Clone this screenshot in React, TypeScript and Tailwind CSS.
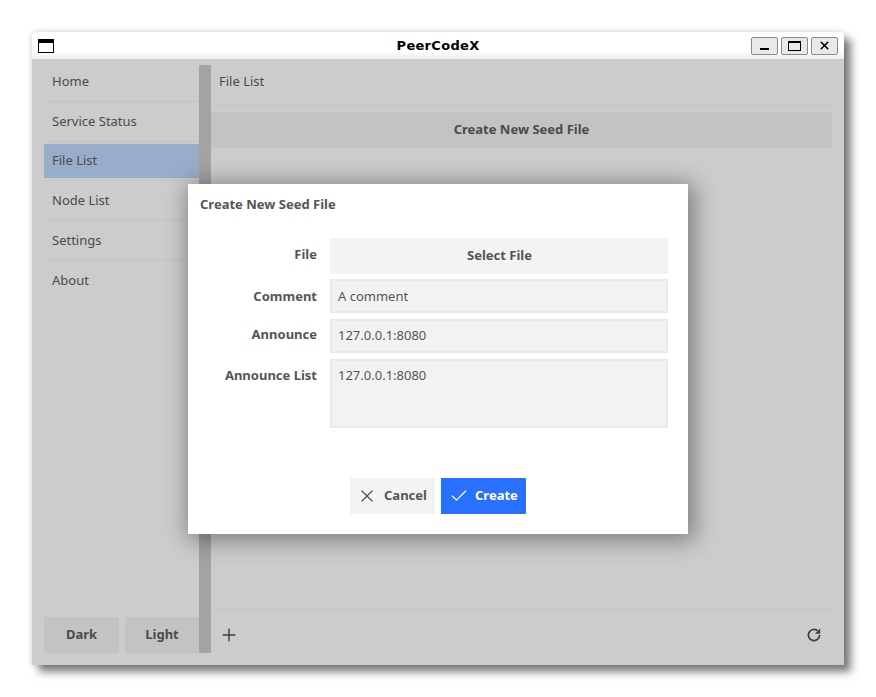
import { Check, Plus, X } from "lucide-react";

const navItems = ["Home", "Service Status", "File List", "Node List", "Settings", "About"];

const WindowButton = ({ children }: { children: React.ReactNode }) => (
  <div className="w-[27px] h-[18px] flex items-center justify-center border border-[#8a8a8a] rounded-[2px] bg-[#e9e9e9]">
    {children}
  </div>
);

const Field = ({ label, className, children }: { label: string; className: string; children: React.ReactNode }) => (
  <div className={`flex ${className}`}>
    <label className="w-[129px] text-right font-bold text-[13px] text-[#555555]">{label}</label>
    <div className="ml-[13px] w-[338px]">{children}</div>
  </div>
);

const inputClass =
  "w-full border-2 border-[#e9e9e9] bg-[#f2f2f2] px-[6px] text-[13px] text-[#555555] flex";

const App = () => {
  return (
    <div className="w-[876px] h-[697px] bg-white overflow-hidden pt-[32px] pl-[32px] font-['Noto_Sans',sans-serif]">
      <div className="relative w-[812px] h-[633px] rounded-t-[3px] bg-[#cccccc] shadow-[0_0_6px_rgba(0,0,0,0.18),7px_7px_8px_rgba(0,0,0,0.5)] flex flex-col">
        {/* Title bar */}
        <div className="h-[27px] shrink-0 bg-gradient-to-b from-white from-70% to-[#eeeeee] rounded-t-[3px] flex items-center pl-[6px] pr-[6px]">
          <div className="flex-1">
            <div className="w-[16px] h-[14px] border border-black border-t-[4px]" />
          </div>
          <div className="text-center text-[13px] font-bold text-black font-['DejaVu_Sans',sans-serif] tracking-[0.3px]">
            PeerCodeX
          </div>
          <div className="flex-1 flex justify-end gap-[3px]">
            <WindowButton>
              <div className="w-[9px] h-[2px] bg-black mt-[7px]" />
            </WindowButton>
            <WindowButton>
              <div className="w-[13px] h-[10px] border border-black border-t-2" />
            </WindowButton>
            <WindowButton>
              <X size={13} strokeWidth={3} className="text-black" />
            </WindowButton>
          </div>
        </div>

        {/* Body */}
        <div className="flex-1 min-h-0 flex pt-[6px] pb-[12px] pl-[12px] pr-[12px] text-[13px] text-[#4b4b4b]">
          {/* Sidebar */}
          <div className="w-[155px] flex flex-col justify-between">
            <div className="flex flex-col -mt-[3px]">
              {navItems.map((item) => (
                <div key={item} className="h-[39.75px] border-b border-[#c3c3c3] last:border-b-0">
                  <div
                    className={`h-[34px] mt-[2.5px] flex items-center px-[8px] ${
                      item === "File List" ? "bg-[#98adcc]" : ""
                    }`}
                  >
                    {item}
                  </div>
                </div>
              ))}
            </div>
            <div className="flex gap-[6px] font-bold">
              <div className="w-[75px] h-[36px] bg-[#c3c3c3] flex items-center justify-center">Dark</div>
              <div className="w-[74px] h-[36px] bg-[#c3c3c3] flex items-center justify-center">Light</div>
            </div>
          </div>

          {/* Splitter */}
          <div className="w-[12px] bg-[#a3a3a3]" />

          {/* Main */}
          <div className="flex-1 flex flex-col">
            <div className="h-[41px] border-b border-[#c3c3c3] flex items-center pl-[8px] pb-[7px]">File List</div>
            <div className="mt-[6px] h-[36px] bg-[#c3c3c3] flex items-center justify-center font-bold">
              Create New Seed File
            </div>
            <div className="flex-1" />
            <div className="h-[44px] border-t border-[#c3c3c3] flex items-center justify-between pl-[8px] pr-[8px] pt-[6px]">
              <Plus size={20} strokeWidth={1.7} className="text-[#3c3c3c]" />
              <svg width="20" height="20" viewBox="0 0 20 20" fill="none" className="text-[#3c3c3c]">
                <path d="M15.6 10a5.6 5.6 0 1 1-1.9-4.2" stroke="currentColor" strokeWidth="1.7" />
                <path d="M16.2 3.6v5.2h-5.2z" fill="currentColor" />
              </svg>
            </div>
          </div>
        </div>

        {/* Dialog */}
        <div className="absolute left-[156px] top-[152px] w-[500px] h-[350px] bg-white shadow-[3px_3px_22px_3px_rgba(0,0,0,0.4)] flex flex-col text-[13px] text-[#555555]">
          <div className="mt-[11px] ml-[12px] font-bold h-[20px] flex items-center">Create New Seed File</div>
          <div className="mt-[23px] flex flex-col">
            <Field label="File" className="h-[36px] leading-[33px]">
              <div className="h-[36px] bg-[#f3f3f3] flex items-center justify-center font-bold pb-[2px] pl-[1px]">Select File</div>
            </Field>
            <Field label="Comment" className="mt-[5px] h-[34px] leading-[34px]">
              <div className={`${inputClass} h-[34px] items-center`}>A comment</div>
            </Field>
            <Field label="Announce" className="mt-[6px] h-[34px] leading-[30px]">
              <div className={`${inputClass} h-[34px] items-center pb-[2px]`}>127.0.0.1:8080</div>
            </Field>
            <Field label="Announce List" className="mt-[6px] h-[69px] leading-[32px]">
              <div className={`${inputClass} h-[69px] pt-[5px] leading-[18px]`}>127.0.0.1:8080</div>
            </Field>
          </div>
          <div className="mt-[50px] ml-[162px] flex gap-[6px] font-bold">
            <div className="w-[85px] h-[36px] bg-[#f3f3f3] flex items-center pl-[7px] gap-[7px]">
              <X size={20} strokeWidth={1.5} />
              Cancel
            </div>
            <div className="w-[85px] h-[36px] bg-[#2970ff] text-white flex items-center pl-[8px] gap-[6px]">
              <Check size={20} strokeWidth={1.5} />
              Create
            </div>
          </div>
        </div>
      </div>
    </div>
  );
};

export default App;
